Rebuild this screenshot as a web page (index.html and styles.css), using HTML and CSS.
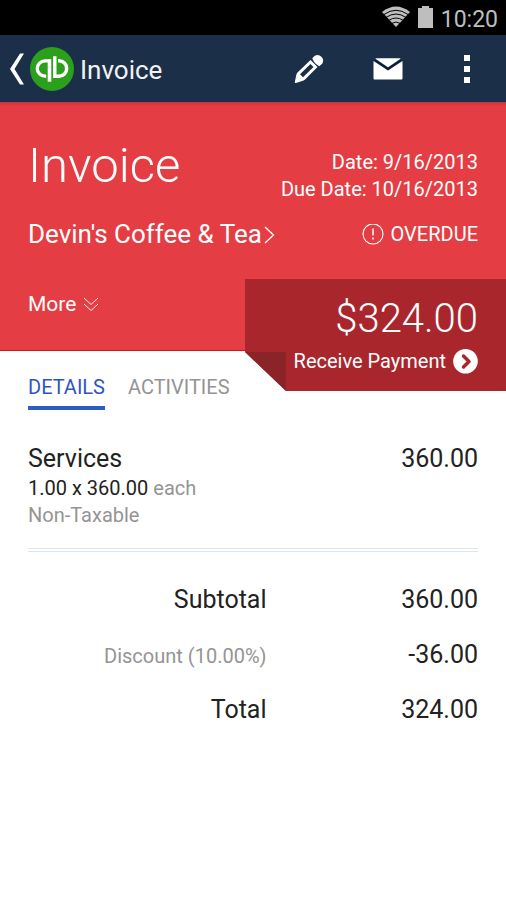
FILE: index.html
```html
<!DOCTYPE html>
<html lang="en">
<head>
<meta charset="utf-8">
<meta name="viewport" content="width=device-width, initial-scale=1">
<title>Invoice</title>
<link rel="stylesheet" href="styles.css">
</head>
<body>
<div class="status-bar">
  <svg class="wifi" width="28" height="22" viewBox="0 0 28 22" aria-hidden="true">
    <path d="M0 6Q14 -5 28 6L14 21Z" fill="#bebebe"/>
    <path d="M2 8.500Q14 0 26 8.500M4 11.500Q14 4.500 24 11.500M6.500 14.500Q14 9.500 21.500 14.500M9.500 17.500Q14 14.500 18.500 17.500" fill="none" stroke="#000" stroke-width="1"/>
  </svg>
  <svg class="battery" width="15" height="22" viewBox="0 0 15 22" aria-hidden="true">
    <path d="M4 0h7v2h4v20H0V2h4z" fill="#bebebe"/>
  </svg>
  <span>10:20</span>
</div>

<header class="app-bar">
  <button class="home" type="button">
    <svg width="16" height="34" viewBox="0 0 16 34" aria-hidden="true">
      <path d="M16 1.500h-4L2 17l10 15.500h4L6.500 17z" fill="#fff"/>
    </svg>
    <svg width="44" height="44" viewBox="0 0 44 44" aria-hidden="true">
      <circle cx="22" cy="22" r="22" fill="#2ca01c"/>
      <path d="M19.500 13.800H15a7.700 7.700 0 0 0 0 15.400h1.200" fill="none" stroke="#fff" stroke-width="3.300"/>
      <path d="M19.500 12.200v22.500" fill="none" stroke="#fff" stroke-width="3.600"/>
      <path d="M24.800 9.300v19.900H29a7.700 7.700 0 0 0 0-15.400h-1" fill="none" stroke="#fff" stroke-width="3.400"/>
    </svg>
    <span>Invoice</span>
  </button>
  <nav class="actions" aria-label="Invoice actions">
    <button type="button" aria-label="Edit">
      <svg width="30" height="30" viewBox="0 0 30 30" aria-hidden="true">
        <path fill-rule="evenodd" d="M16.500 6L3.500 18.500Q2.500 19.500 2.300 21L.8 28q-.1 1.200 1 1L9 26.800q1-.3 2-1.300L23.500 13zM16.500 10l3 3L9 23.300l-3-3z" fill="#fff"/>
        <path d="M18.300 4.200L20.500 2a5.600 5.600 0 0 1 7.700 7.700l-3 2.500q-5-2.500-6.900-8z" fill="#fff"/>
      </svg>
    </button>
    <button type="button" aria-label="Send email">
      <svg width="30" height="22" viewBox="0 0 30 22" aria-hidden="true">
        <path d="M3 .2h24q1 0 .2.700L15 9.200 2.800.9Q2 .2 3 .2z" fill="#fff"/>
        <path d="M.5 3L15 12.500 29.500 3v17.500q0 1-1 1h-27q-1 0-1-1z" fill="#fff"/>
        <path d="M1.500 2L15 11 28.500 2" fill="none" stroke="#0c1c3c" stroke-width="1.500"/>
      </svg>
    </button>
    <button class="overflow" type="button" aria-label="More options">
      <svg width="8" height="30" viewBox="0 0 8 30" aria-hidden="true">
        <path d="M1 1h6v6H1zM1 12h6v6H1zM1 23h6v6H1z" fill="#fff"/>
      </svg>
    </button>
  </nav>
</header>

<main>
  <section class="summary">
    <div class="row heading">
      <h1>Invoice</h1>
      <p class="dates">Date: 9/16/2013<br>Due Date: 10/16/2013</p>
    </div>
    <div class="row party">
      <a class="customer" href="#customer">Devin's Coffee &amp; Tea
        <svg width="11" height="18" viewBox="0 0 11 18" aria-hidden="true">
          <path d="M1 1l8.500 8L1 17" fill="none" stroke="#fff" stroke-width="1.300"/>
        </svg>
      </a>
      <p class="overdue">
        <svg width="22" height="22" viewBox="0 0 22 22" aria-hidden="true">
          <circle cx="11" cy="10" r="10" fill="none" stroke="#fff" stroke-width="1.100"/>
          <path d="M11 4.500v7M11 13.500v2" stroke="#fff" stroke-width="1.500"/>
        </svg>
        OVERDUE
      </p>
    </div>
    <button class="more" type="button">More
      <svg width="16" height="15" viewBox="0 0 16 15" aria-hidden="true">
        <path d="M1 1l7 6.500L15 1M1 7l7 6.500L15 7" fill="none" stroke="#fff" stroke-width=".9"/>
      </svg>
    </button>
    <a class="payment" href="#receive">
      <span class="amount">$324.00</span>
      <span class="receive">Receive Payment
        <svg width="25" height="25" viewBox="0 0 25 25" aria-hidden="true">
          <circle cx="12.500" cy="12.300" r="12.300" fill="#fff"/>
          <path d="M10.500 7l5.500 5.500-5.500 5.500" fill="none" stroke="#a9262d" stroke-width="3.500" stroke-linecap="round" stroke-linejoin="round"/>
        </svg>
      </span>
    </a>
  </section>

  <nav class="tabs" aria-label="Invoice sections">
    <a class="active" href="#details">DETAILS</a>
    <a href="#activities">ACTIVITIES</a>
  </nav>

  <section class="details" id="details">
    <div class="item">
      <div>
        <h2>Services</h2>
        <p>1.00 x 360.00 <span class="muted">each</span></p>
        <p class="muted">Non-Taxable</p>
      </div>
      <span class="value">360.00</span>
    </div>
    <table class="totals">
      <tr><th scope="row">Subtotal</th><td>360.00</td></tr>
      <tr><th scope="row" class="minor">Discount (10.00%)</th><td>-36.00</td></tr>
      <tr><th scope="row">Total</th><td>324.00</td></tr>
    </table>
  </section>
</main>
</body>
</html>
```
FILE: styles.css
```css
* { box-sizing: border-box; }

body {
  margin: 0;
  min-height: 100vh;
  background: #fff;
  color: #222;
  font-family: Roboto, "Liberation Sans", sans-serif;
  font-size: 20px;
  line-height: 27px;
}

h1, h2, p { margin: 0; font-weight: 400; }
a { color: inherit; text-decoration: none; }
svg { display: block; flex: none; }

button {
  padding: 0;
  border: 0;
  background: none;
  color: inherit;
  font: inherit;
  cursor: pointer;
}

.status-bar {
  display: flex;
  justify-content: flex-end;
  align-items: center;
  gap: 8px;
  height: 35px;
  padding: 0 8px 1px;
  background: #000;
  color: #bebebe;
  font-size: 23px;
}
.status-bar span { padding-top: 4px; }

.app-bar {
  display: flex;
  justify-content: space-between;
  align-items: center;
  height: 67px;
  padding: 0 0 0 8px;
  background: #1b3048;
  color: #f2f2f2;
}
.home { display: flex; align-items: center; gap: 6px; font-size: 26px; }
.home span { padding-top: 3px; }
.actions { display: flex; align-items: center; }
.actions button {
  display: flex;
  justify-content: center;
  align-items: center;
  width: 79px;
  height: 56px;
}

.summary {
  position: relative;
  height: 249px;
  padding: 33px 28px 0;
  border-bottom: 1px solid #d0141c;
  background: linear-gradient(#c4343b, #e43d44 4px);
  color: #fff;
}
.row { display: flex; justify-content: space-between; }
.heading { height: 86px; }
h1 { font-size: 49px; font-weight: 300; line-height: 62px; }
.dates { padding-top: 14px; text-align: right; }
.party { align-items: center; }
.customer { display: flex; align-items: center; gap: 2px; font-size: 26px; }
.overdue { display: flex; align-items: center; gap: 7px; }
.more { display: flex; align-items: center; gap: 7px; margin-top: 43px; font-size: 21px; }

.payment {
  position: absolute;
  top: 177px;
  right: 0;
  display: flex;
  flex-direction: column;
  align-items: flex-end;
  width: 261px;
  height: 112px;
  padding: 17px 28px 0 0;
  background: linear-gradient(#8b2429, #8b2429) 0 73px / 41px 39px no-repeat #a9262d;
  clip-path: polygon(0 0, 100% 0, 100% 100%, 41px 100%, 0 73px);
}
.amount { font-size: 40px; font-weight: 300; line-height: 46px; }
.receive { display: flex; align-items: center; gap: 7px; margin-top: 6px; }

.tabs { display: flex; gap: 23px; padding: 23px 28px 0; color: #949494; }
.tabs a { padding-bottom: 5px; border-bottom: 4px solid transparent; }
.tabs .active { border-color: #2f5bc4; color: #2f55bd; }

.details { padding: 32px 28px 0; }
.item {
  display: flex;
  justify-content: space-between;
  padding-bottom: 19px;
  border-bottom: 4px double #dce6f0;
}
h2, .value { font-size: 25px; line-height: 33px; }
.muted, .totals .minor { color: #949494; }

.totals { width: 100%; margin-top: 20px; border-collapse: collapse; font-size: 25px; }
.totals th, .totals td { height: 55px; padding: 0; font-weight: 400; text-align: right; }
.totals th { width: 53%; }
.totals .minor { padding-top: 4px; font-size: 20px; }
```
